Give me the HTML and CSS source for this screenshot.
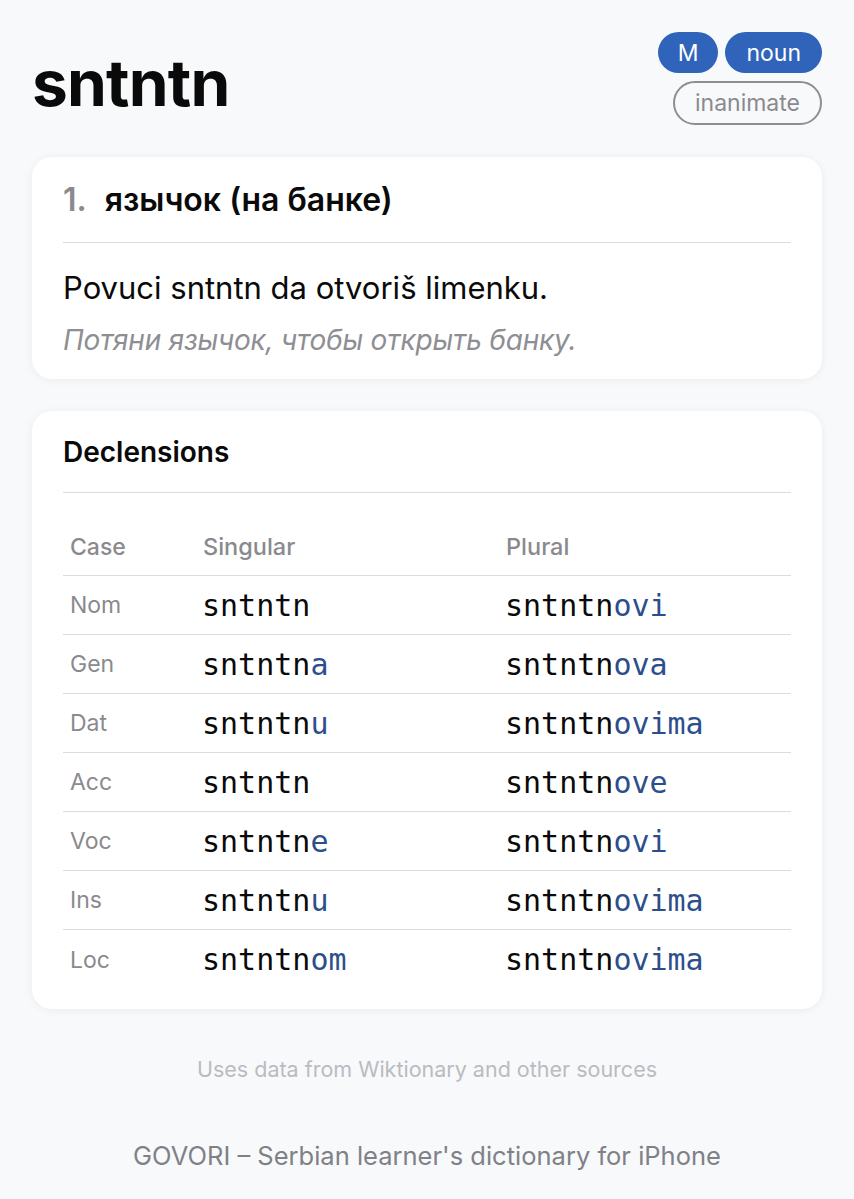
FILE: index.html
```html
<!DOCTYPE html>
<html lang="en">
<head>
<meta charset="utf-8">
<title>sntntn</title>
<link rel="stylesheet" href="styles.css">
</head>
<body>
<div class="page">
  <header class="head">
    <h1 class="word">sntntn</h1>
    <div class="tags">
      <div class="tag-row">
        <span class="tag tag-solid">M</span>
        <span class="tag tag-solid">noun</span>
      </div>
      <span class="tag tag-outline">inanimate</span>
    </div>
  </header>

  <section class="card">
    <div class="sense-title"><span class="num">1.</span>язычок (на банке)</div>
    <div class="divider"></div>
    <p class="example">Povuci sntntn da otvoriš limenku.</p>
    <p class="translation">Потяни язычок, чтобы открыть банку.</p>
  </section>

  <section class="card">
    <div class="card-title">Declensions</div>
    <div class="divider divider-tight"></div>
    <div class="table">
      <div class="row head-row">
        <div class="c-case">Case</div><div class="c-form">Singular</div><div class="c-form">Plural</div>
      </div>
      <div class="row">
        <div class="c-case">Nom</div><div class="c-form mono">sntntn</div><div class="c-form mono">sntntn<span class="end">ovi</span></div>
      </div>
      <div class="row">
        <div class="c-case">Gen</div><div class="c-form mono">sntntn<span class="end">a</span></div><div class="c-form mono">sntntn<span class="end">ova</span></div>
      </div>
      <div class="row">
        <div class="c-case">Dat</div><div class="c-form mono">sntntn<span class="end">u</span></div><div class="c-form mono">sntntn<span class="end">ovima</span></div>
      </div>
      <div class="row">
        <div class="c-case">Acc</div><div class="c-form mono">sntntn</div><div class="c-form mono">sntntn<span class="end">ove</span></div>
      </div>
      <div class="row">
        <div class="c-case">Voc</div><div class="c-form mono">sntntn<span class="end">e</span></div><div class="c-form mono">sntntn<span class="end">ovi</span></div>
      </div>
      <div class="row">
        <div class="c-case">Ins</div><div class="c-form mono">sntntn<span class="end">u</span></div><div class="c-form mono">sntntn<span class="end">ovima</span></div>
      </div>
      <div class="row last">
        <div class="c-case">Loc</div><div class="c-form mono">sntntn<span class="end">om</span></div><div class="c-form mono">sntntn<span class="end">ovima</span></div>
      </div>
    </div>
  </section>

  <footer class="foot">
    <p class="source">Uses data from Wiktionary and other sources</p>
    <p class="app">GOVORI – Serbian learner's dictionary for iPhone</p>
  </footer>
</div>
</body>
</html>
```

FILE: styles.css
```css
* { box-sizing: border-box; }
html, body { margin: 0; padding: 0; }
body {
  background: #f8f9fb;
  font-family: Inter, "Noto Sans", "Liberation Sans", sans-serif;
  color: #0a0a0a;
}
.page {
  padding: 32px 32px 0 32px;
  display: flex;
  flex-direction: column;
  gap: 32px;
}
.head {
  display: flex;
  justify-content: space-between;
  align-items: flex-start;
}
.word {
  margin: 16px 0 0 0;
  font-size: 64px;
  line-height: 70px;
  font-weight: 700;
  letter-spacing: -0.8px;
}
.tags {
  display: flex;
  flex-direction: column;
  align-items: flex-end;
  gap: 8px;
}
.tag-row { display: flex; gap: 7px; }
.tag {
  display: inline-flex;
  align-items: center;
  justify-content: center;
  height: 41px;
  border-radius: 21px;
  font-size: 23px;
  padding: 0 21px;
}
.tag-solid { background: #2f64ba; color: #fff; }
.tag-solid:first-child { padding: 0 20px; }
.tag-outline {
  height: 44px;
  border: 2px solid #8e8e92;
  color: #8a8a8e;
  border-radius: 22px;
  padding: 0 20px;
  font-size: 23px;
}
.card {
  background: #fff;
  border-radius: 20px;
  box-shadow: 0 1px 8px rgba(0,0,0,0.06);
  padding: 26px 31px 22px 31px;
}
.card + .card { padding-bottom: 20px; }
.sense-title, .card-title {
  font-size: 32px;
  line-height: 34px;
  font-weight: 600;
}
.card-title { font-size: 28px; margin-top: -2px; }
.num { color: #8a8a8e; margin-right: 18px; }
.divider { height: 1px; background: #dcdcdf; margin-top: 25px; }
.divider-tight { margin-top: 23px; }
.example {
  margin: 27px 0 0 0;
  font-size: 31px;
  line-height: 36px;
}
.translation {
  margin: 17px 0 0 0;
  font-size: 28px;
  line-height: 34px;
  font-style: italic;
  color: #8e8e93;
  letter-spacing: -0.2px;
}
.table { margin-top: 25px; }
.row {
  display: grid;
  grid-template-columns: 133px 303px 1fr;
  align-items: center;
  height: 59px;
  border-bottom: 1px solid #dcdcdf;
}
.row.last { border-bottom: none; }
.head-row { height: 58px; }
.c-case, .c-form { padding-left: 7px; }
.c-case { font-size: 23px; color: #8a8a8e; }
.head-row .c-form { font-size: 23.5px; color: #8a8a8e; font-weight: 500; }
.head-row .c-case { font-weight: 500; }
.mono {
  font-family: "DejaVu Sans Mono", "Liberation Mono", monospace;
  font-size: 30px;
  color: #0a0a0a;
  padding-left: 6px;
}
.end { color: #2c4f8c; }
.foot {
  display: flex;
  flex-direction: column;
  align-items: center;
}
.source {
  margin: 15px 0 0 0;
  font-size: 21.5px;
  line-height: 26px;
  color: #b9bcc1;
}
.app {
  margin: 59px 0 0 0;
  font-size: 25.5px;
  line-height: 30px;
  color: #7f8187;
}
```
